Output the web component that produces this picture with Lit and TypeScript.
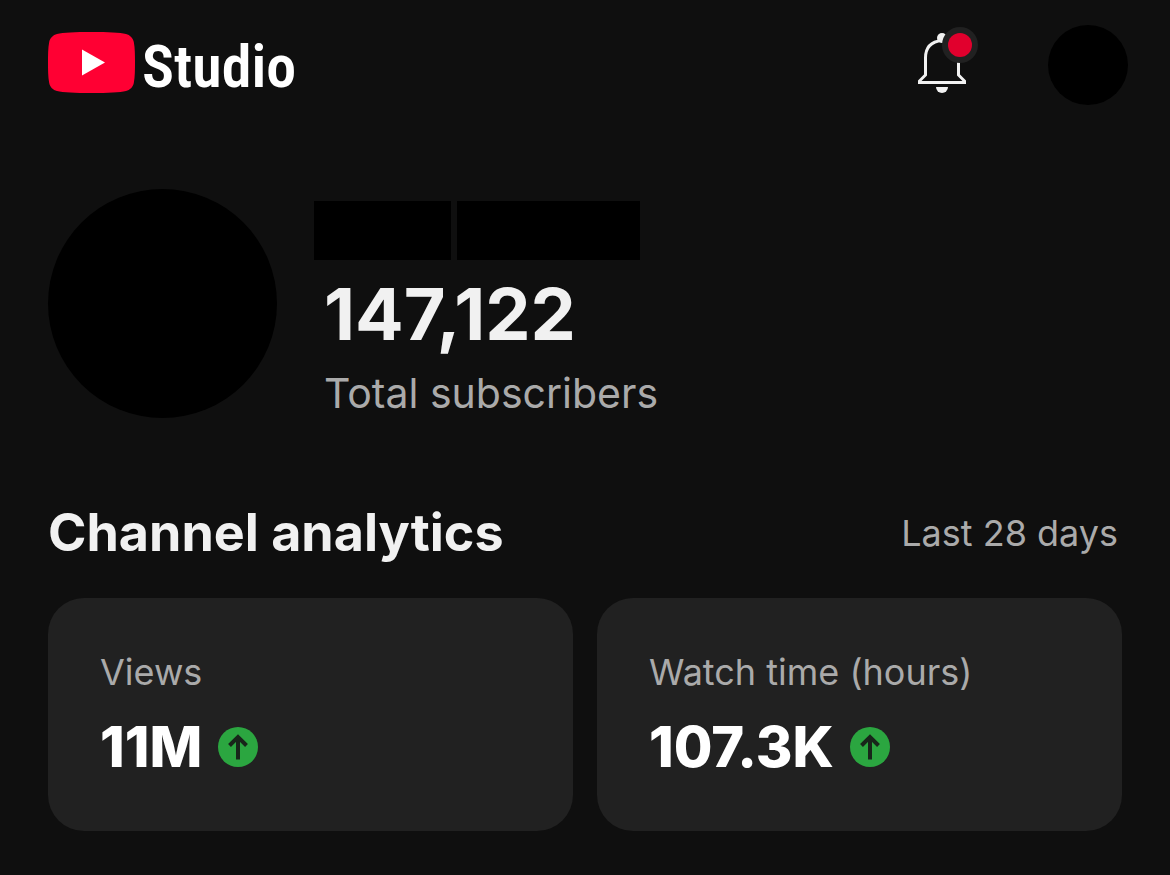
import { LitElement, html, css, svg } from "lit";
import { customElement, property } from "lit/decorators.js";

@customElement("metric-card")
class MetricCard extends LitElement {
  @property() label = "";
  @property() value = "";

  static styles = css`
    :host {
      display: block;
      box-sizing: border-box;
      padding: 52px;
      border-radius: 36px;
      background: #212121;
    }
    .label {
      margin: 0;
      font-size: 36px;
      line-height: 44px;
      color: #aaa;
    }
    .row {
      display: flex;
      align-items: center;
      gap: 16px;
      margin: 21px 0 0;
    }
    .value {
      font-size: 56px;
      line-height: 64px;
      font-weight: 800;
      color: #fff;
    }
    .trend {
      width: 40px;
      height: 40px;
      flex: none;
    }
  `;

  render() {
    return html`
      <p class="label">${this.label}</p>
      <div class="row">
        <span class="value">${this.value}</span>
        <svg class="trend" viewBox="0 0 40 40" role="img" aria-label="Up">
          <circle cx="20" cy="20" r="20" fill="#2ba640" />
          <path d="M20 32.500V10.500M11.500 18.500l8.500-8.500 8.500 8.500" fill="none" stroke="#18251a" stroke-width="4" />
        </svg>
      </div>
    `;
  }
}

const logo = svg`
  <path d="M43.500 0C60 0 72 .5 78 2c4 1 7 4 7.800 8C87 16 87 24 87 30.500S87 45 85.800 51c-.8 4-3.800 7-7.800 8-6 1.500-18 2-34.500 2S15 60.500 9 59c-4-1-7-4-7.800-8C0 45 0 37 0 30.500S0 16 1.200 10C2 6 5 3 9 2 15 .5 27 0 43.500 0Z" fill="#ff0033"/>
  <path d="M34 17.500 57 30.500 34 43.500Z" fill="#fff"/>`;

@customElement("app-root")
class AppRoot extends LitElement {
  static styles = css`
    :host {
      display: block;
      box-sizing: border-box;
      min-height: 100vh;
      padding: 25px 48px 44px;
      background: #0f0f0f;
      color: #f1f1f1;
      font-family: Inter, Roboto, sans-serif;
    }
    header {
      display: flex;
      align-items: flex-start;
      justify-content: space-between;
      margin-right: -6px;
    }
    .brand {
      display: flex;
      align-items: flex-start;
      gap: 7px;
      padding-top: 7px;
      color: #fff;
      text-decoration: none;
      font-family: "Roboto Condensed", "Liberation Sans Narrow", sans-serif;
      font-size: 60px;
      line-height: 70px;
      font-weight: 600;
    }
    .mark {
      width: 87px;
      height: 61px;
    }
    .actions {
      display: flex;
      align-items: flex-start;
      gap: 70px;
    }
    button {
      display: block;
      padding: 0;
      border: 0;
      background: none;
    }
    .bell {
      display: block;
      width: 60px;
      height: 76px;
    }
    .account {
      width: 80px;
      height: 80px;
      border-radius: 50%;
      background: #000;
    }
    .channel {
      display: flex;
      align-items: flex-start;
      gap: 37px;
      margin-top: 84px;
    }
    .avatar {
      width: 229px;
      height: 229px;
      flex: none;
      border-radius: 50%;
      background: #000;
    }
    .details {
      padding-top: 12px;
    }
    .name {
      display: flex;
      gap: 6px;
    }
    .first,
    .last {
      width: 137px;
      height: 59px;
      background: #000;
    }
    .last {
      width: 183px;
    }
    .stats {
      padding-left: 10px;
    }
    .count {
      margin: 12px 0 0;
      font-size: 72px;
      line-height: 84px;
      font-weight: 700;
    }
    .caption {
      margin: 12px 0 0;
      font-size: 41px;
      line-height: 50px;
      color: #aaa;
    }
    .heading {
      display: flex;
      align-items: center;
      justify-content: space-between;
      margin-top: 82px;
    }
    h2 {
      margin: 0;
      font-size: 52px;
      line-height: 66px;
      font-weight: 700;
    }
    .period {
      padding-right: 4px;
      font-size: 36px;
      line-height: 44px;
      color: #aaa;
    }
    .cards {
      display: grid;
      grid-template-columns: 1fr 1fr;
      gap: 24px;
      margin-top: 32px;
    }
  `;

  render() {
    return html`
      <header>
        <a class="brand" href="#" aria-label="YouTube Studio">
          <svg class="mark" viewBox="0 0 87 61" aria-hidden="true">${logo}</svg>
          <span>Studio</span>
        </a>
        <div class="actions">
          <button aria-label="Notifications">
            <svg class="bell" viewBox="0 3 60 76" aria-hidden="true">
              <circle cx="24" cy="16" r="5" fill="#f1f1f1" />
              <path d="M24 18.500C13 19.500 7.500 26 7.500 36V53L1.500 59v1.500h45V59l-6-6V36C40.500 26 35 19.500 24 18.500Z" fill="none" stroke="#f1f1f1" stroke-width="3" />
              <path d="M18 65h12a6 6 0 0 1-12 0Z" fill="#f1f1f1" />
              <circle cx="42" cy="23" r="18" fill="#212121" />
              <circle cx="42" cy="23" r="12" fill="#e1002d" />
            </svg>
          </button>
          <button class="account" aria-label="Account"></button>
        </div>
      </header>
      <main>
        <section class="channel">
          <div class="avatar"></div>
          <div class="details">
            <div class="name"><div class="first"></div><div class="last"></div></div>
            <div class="stats">
              <p class="count">147,122</p>
              <p class="caption">Total subscribers</p>
            </div>
          </div>
        </section>
        <section>
          <div class="heading">
            <h2>Channel analytics</h2>
            <span class="period">Last 28 days</span>
          </div>
          <div class="cards">
            <metric-card label="Views" value="11M"></metric-card>
            <metric-card label="Watch time (hours)" value="107.3K"></metric-card>
          </div>
        </section>
      </main>
    `;
  }
}
